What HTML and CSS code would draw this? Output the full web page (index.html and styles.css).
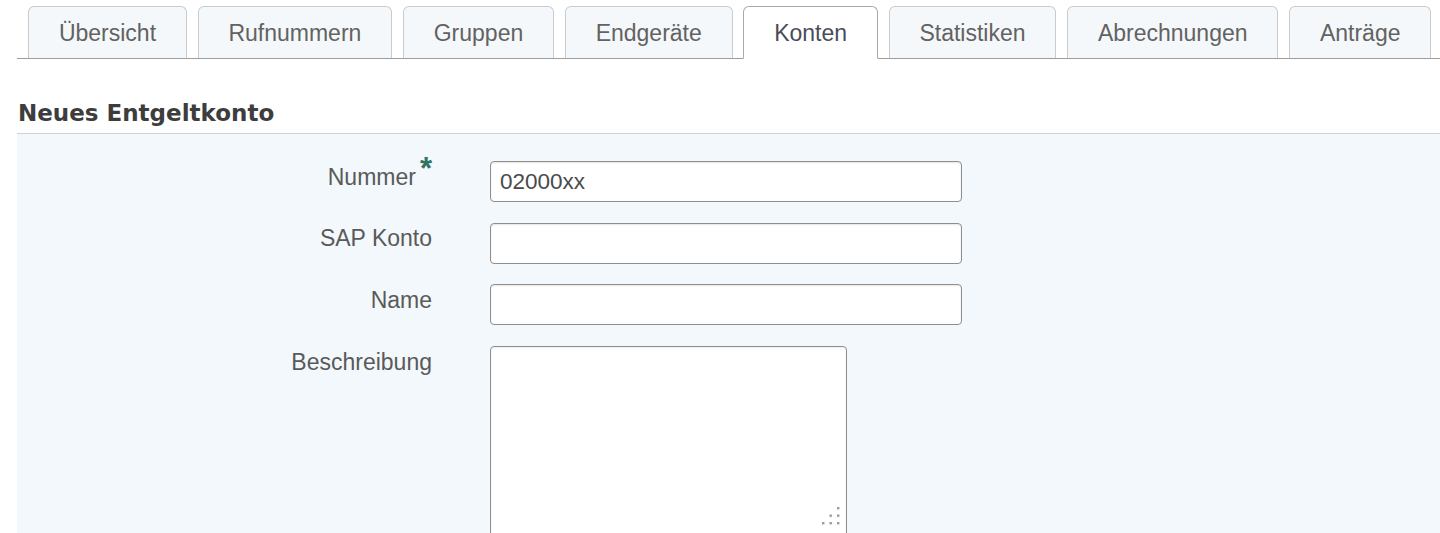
FILE: index.html
```html
<!DOCTYPE html>
<html lang="de">
<head>
<meta charset="utf-8">
<title>Neues Entgeltkonto</title>
<link rel="stylesheet" href="styles.css">
</head>
<body>
<div class="page">
  <nav class="tabs">
    <a class="tab">Übersicht</a>
    <a class="tab">Rufnummern</a>
    <a class="tab">Gruppen</a>
    <a class="tab">Endgeräte</a>
    <a class="tab tab-active">Konten</a>
    <a class="tab">Statistiken</a>
    <a class="tab">Abrechnungen</a>
    <a class="tab">Anträge</a>
  </nav>

  <h2 class="title">Neues Entgeltkonto</h2>

  <form class="form">
    <div class="row">
      <label class="label" for="nummer">Nummer<span class="req">*</span></label>
      <input class="input" id="nummer" type="text" value="02000xx">
    </div>
    <div class="row">
      <label class="label" for="sap">SAP Konto</label>
      <input class="input" id="sap" type="text">
    </div>
    <div class="row">
      <label class="label" for="name">Name</label>
      <input class="input" id="name" type="text">
    </div>
    <div class="row">
      <label class="label" for="desc">Beschreibung</label>
      <span class="area-wrap">
        <textarea class="area" id="desc"></textarea>
        <svg class="grip" width="18" height="18" viewBox="0 0 18 18" aria-hidden="true">
          <rect x="15" y="0" width="2.4" height="2.4" fill="#9c9c9c"/>
          <rect x="7.5" y="7.5" width="2.4" height="2.4" fill="#9c9c9c"/>
          <rect x="15" y="7.5" width="2.4" height="2.4" fill="#9c9c9c"/>
          <rect x="0" y="15" width="2.4" height="2.4" fill="#9c9c9c"/>
          <rect x="7.5" y="15" width="2.4" height="2.4" fill="#9c9c9c"/>
          <rect x="15" y="15" width="2.4" height="2.4" fill="#9c9c9c"/>
        </svg>
      </span>
    </div>
  </form>
</div>
</body>
</html>
```

FILE: styles.css
```css
html, body {
  margin: 0;
  padding: 0;
  background: #ffffff;
}

body {
  font-family: "Liberation Sans", Arial, sans-serif;
  color: #5a5a5a;
  overflow: hidden;
}

.page {
  padding-left: 17px;
}

/* Tabs */
.tabs {
  display: flex;
  align-items: flex-end;
  gap: 10.6px;
  padding: 6px 0 0 11px;
  border-bottom: 1px solid #9d9d9d;
}

.tab {
  box-sizing: border-box;
  height: 52px;
  display: flex;
  align-items: center;
  padding: 1px 29.9px 0;
  border: 1px solid #cbcbcb;
  border-bottom: none;
  border-radius: 6px 6px 0 0;
  background: #f5f8fa;
  font-size: 23px;
  color: #626262;
  white-space: nowrap;
  cursor: pointer;
}

.tab-active {
  height: 53px;
  margin-bottom: -1px;
  background: #ffffff;
  border-color: #a9a9a9;
  border-bottom: 1px solid #ffffff;
  color: #4c4c58;
}

/* Heading */
.title {
  margin: 40px 0 0;
  padding: 0 0 6px 1px;
  font-family: "DejaVu Sans", Verdana, sans-serif;
  font-weight: 700;
  font-size: 23px;
  line-height: 28px;
  color: #3d3d3d;
  border-bottom: 1px solid #cfd2d5;
}

/* Form */
.form {
  display: flex;
  flex-direction: column;
  gap: 20.7px;
  margin: 0;
  padding-top: 27px;
  min-height: 440px;
  background: #f3f8fc;
}

.row {
  display: grid;
  grid-template-columns: 415px auto;
  column-gap: 58px;
  align-items: start;
}

.label {
  text-align: right;
  padding-top: 1.5px;
  font-size: 23px;
  line-height: 28px;
  color: #5a5a5a;
}

.req {
  position: relative;
  top: -6px;
  margin-left: 4px;
  font-weight: 700;
  font-size: 31px;
  line-height: 0;
  color: #2f7363;
}

.input {
  box-sizing: border-box;
  width: 472px;
  height: 41px;
  margin: 0;
  padding: 0 9px;
  border: 1px solid #8e8e8e;
  border-radius: 4px;
  background: #ffffff;
  box-shadow: inset 0 1px 2px rgba(0, 0, 0, 0.1);
  font-family: "Liberation Sans", Arial, sans-serif;
  font-size: 22.5px;
  color: #4a4a4a;
  outline: none;
}

.area-wrap {
  position: relative;
  display: block;
  width: 357px;
}

.area {
  box-sizing: border-box;
  display: block;
  width: 357px;
  height: 192px;
  margin: 0;
  padding: 6px 8px;
  border: 1px solid #8e8e8e;
  border-radius: 4px;
  background: #ffffff;
  box-shadow: inset 0 1px 2px rgba(0, 0, 0, 0.08);
  font-family: "Liberation Sans", Arial, sans-serif;
  font-size: 22px;
  resize: none;
  outline: none;
}

.grip {
  position: absolute;
  right: 7px;
  top: 161px;
}
```
